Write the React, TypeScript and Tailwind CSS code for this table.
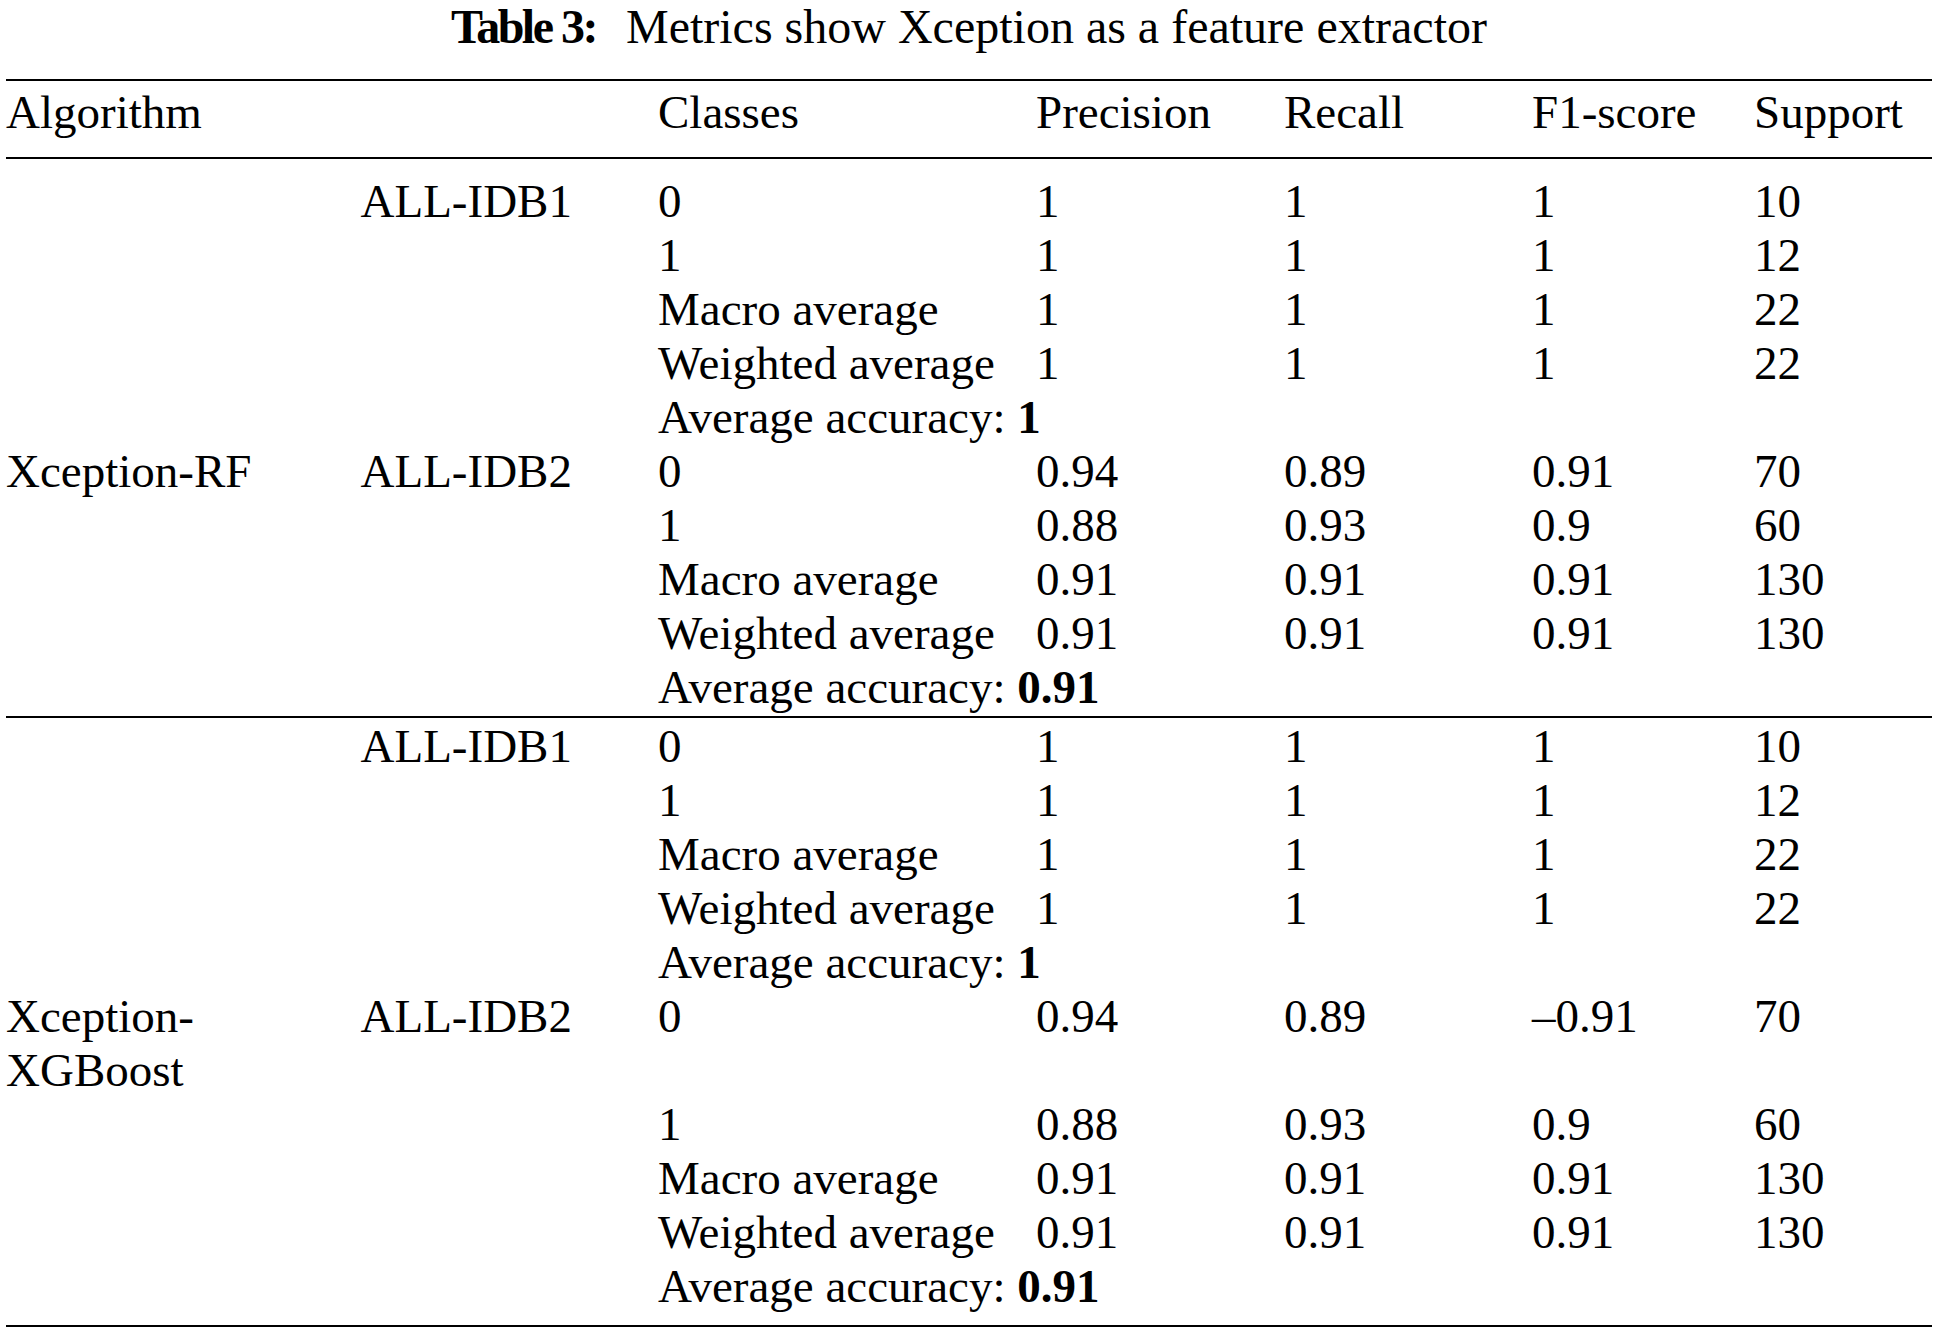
import React from "react";

type Row =
  | { kind: "data"; algo?: React.ReactNode; ds?: string; cls: string; p: string; r: string; f: string; s: string }
  | { kind: "acc"; value: string };

const group1: Row[] = [
  { kind: "data", ds: "ALL-IDB1", cls: "0", p: "1", r: "1", f: "1", s: "10" },
  { kind: "data", cls: "1", p: "1", r: "1", f: "1", s: "12" },
  { kind: "data", cls: "Macro average", p: "1", r: "1", f: "1", s: "22" },
  { kind: "data", cls: "Weighted average", p: "1", r: "1", f: "1", s: "22" },
  { kind: "acc", value: "1" },
  { kind: "data", algo: "Xception-RF", ds: "ALL-IDB2", cls: "0", p: "0.94", r: "0.89", f: "0.91", s: "70" },
  { kind: "data", cls: "1", p: "0.88", r: "0.93", f: "0.9", s: "60" },
  { kind: "data", cls: "Macro average", p: "0.91", r: "0.91", f: "0.91", s: "130" },
  { kind: "data", cls: "Weighted average", p: "0.91", r: "0.91", f: "0.91", s: "130" },
  { kind: "acc", value: "0.91" },
];

const group2: Row[] = [
  { kind: "data", ds: "ALL-IDB1", cls: "0", p: "1", r: "1", f: "1", s: "10" },
  { kind: "data", cls: "1", p: "1", r: "1", f: "1", s: "12" },
  { kind: "data", cls: "Macro average", p: "1", r: "1", f: "1", s: "22" },
  { kind: "data", cls: "Weighted average", p: "1", r: "1", f: "1", s: "22" },
  { kind: "acc", value: "1" },
  {
    kind: "data",
    algo: (
      <>
        Xception-
        <br />
        XGBoost
      </>
    ),
    ds: "ALL-IDB2",
    cls: "0",
    p: "0.94",
    r: "0.89",
    f: "\u20130.91",
    s: "70",
  },
  { kind: "data", cls: "1", p: "0.88", r: "0.93", f: "0.9", s: "60" },
  { kind: "data", cls: "Macro average", p: "0.91", r: "0.91", f: "0.91", s: "130" },
  { kind: "data", cls: "Weighted average", p: "0.91", r: "0.91", f: "0.91", s: "130" },
  { kind: "acc", value: "0.91" },
];

const gridCls = "grid grid-cols-[354.5px_297.5px_378px_248px_248px_222px_1fr] leading-[54px]";

function TableRow({ row }: { row: Row }) {
  if (row.kind === "acc") {
    return (
      <div className={gridCls}>
        <div className="col-start-3 col-span-5 whitespace-nowrap">
          Average accuracy: <span className="font-bold">{row.value}</span>
        </div>
      </div>
    );
  }
  return (
    <div className={gridCls}>
      <div className="whitespace-nowrap">{row.algo ?? ""}</div>
      <div className="whitespace-nowrap">{row.ds ?? ""}</div>
      <div className="whitespace-nowrap">{row.cls}</div>
      <div className="whitespace-nowrap">{row.p}</div>
      <div className="whitespace-nowrap">{row.r}</div>
      <div className="whitespace-nowrap">{row.f}</div>
      <div className="whitespace-nowrap">{row.s}</div>
    </div>
  );
}

export default function App() {
  return (
    <div className="w-[1937px] h-[1333px] bg-white text-black pl-[6px] pr-[5px] font-['Liberation_Serif','Times_New_Roman',serif]">
      <div className="h-[79px] text-center text-[48px] leading-[53.2px] whitespace-nowrap">
        <span className="font-bold tracking-[-2.5px] mr-[30px]">Table 3:</span>
        <span>Metrics show Xception as a feature extractor</span>
      </div>
      <div className="text-[47px]">
        <div className="border-t-2 border-black h-[78px] pt-[4.1px]">
          <div className={gridCls}>
            <div>Algorithm</div>
            <div></div>
            <div>Classes</div>
            <div>Precision</div>
            <div>Recall</div>
            <div>F1-score</div>
            <div>Support</div>
          </div>
        </div>
        <div className="border-t-2 border-black pt-[14.7px] pb-[2.3px]">
          {group1.map((r, i) => (
            <TableRow key={i} row={r} />
          ))}
        </div>
        <div className="border-t-2 border-black pt-[0.7px] pb-[12.3px]">
          {group2.map((r, i) => (
            <TableRow key={i} row={r} />
          ))}
        </div>
        <div className="border-t-2 border-black"></div>
      </div>
    </div>
  );
}
